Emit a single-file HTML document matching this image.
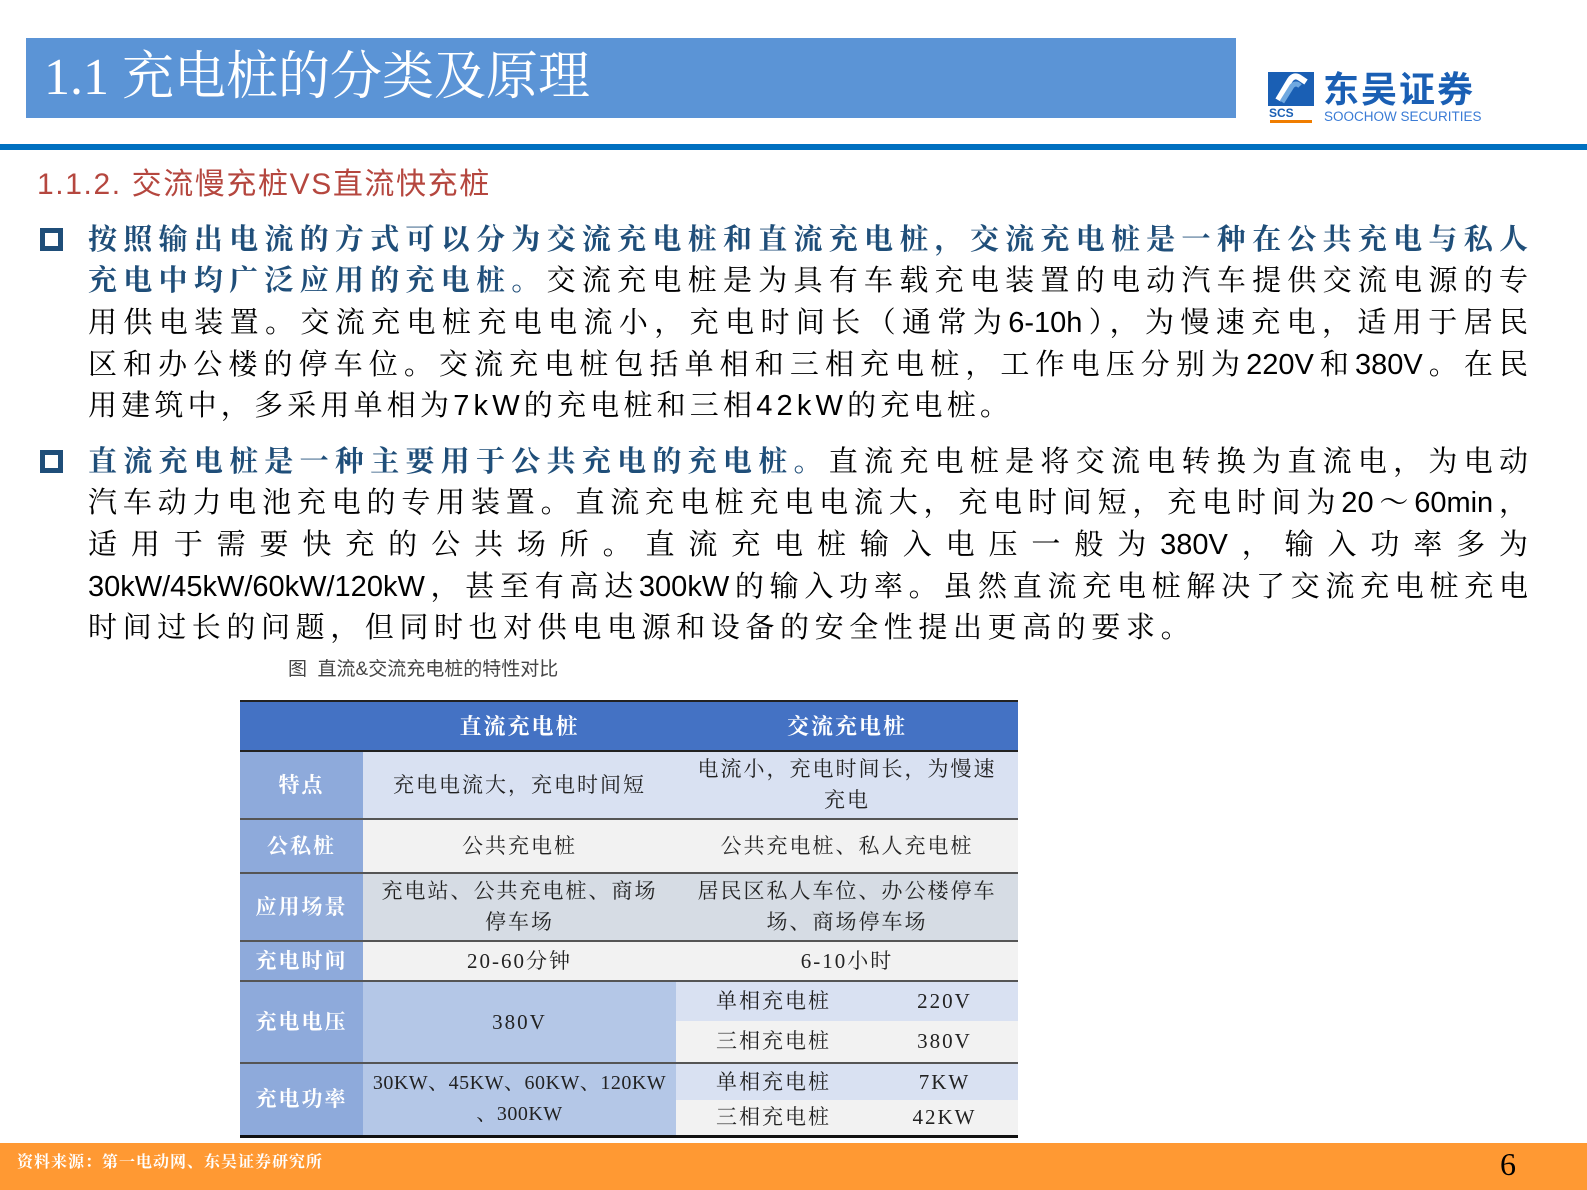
<!DOCTYPE html>
<html><head><meta charset="utf-8">
<style>
*{margin:0;padding:0;box-sizing:border-box}
body{width:1587px;height:1190px;position:relative;background:#fff;overflow:hidden;font-family:"Liberation Serif","Noto Serif CJK SC",serif}
.abs{position:absolute}
.ln{position:absolute;left:88px;width:1440px;height:42px;line-height:42px;font-size:29px;white-space:nowrap;text-align:justify;text-align-last:justify;color:#000;font-family:"Liberation Sans","Noto Serif CJK SC",serif}
.ln.last{text-align:left;text-align-last:left;letter-spacing:4.2px}
.b{color:#1f4e79;font-weight:bold}
.box{position:absolute;left:40px;width:23px;height:23px;border:5px solid #1f4e79}
table{position:absolute;left:240px;top:700px;width:778px;border-collapse:collapse;font-family:"Liberation Serif","Noto Serif CJK SC",serif;font-size:21px;letter-spacing:2px;color:#222}
td{text-align:center;vertical-align:middle;line-height:31px;padding:0;white-space:nowrap}
.h td{background:#4472c4;color:#fff;font-weight:bold;height:50px;border-top:2px solid #222;border-bottom:2px solid #222;font-size:22px}
.c1{background:#8eaadb;color:#fff;font-weight:bold;width:123px}
tr.r td{border-bottom:2px solid #555}
</style></head><body>
<div class="abs" style="left:26px;top:38px;width:1210px;height:80px;background:#5b94d6"></div>
<div class="abs" style="left:44px;top:46px;font-size:52px;color:#fff;line-height:64px;font-family:'Liberation Serif','Noto Serif CJK SC',serif">1.1 充电桩的分类及原理</div>
<svg class="abs" style="left:1268px;top:72px" width="50" height="52" viewBox="0 0 50 52">
<rect x="0" y="0" width="46" height="34" fill="#1a5fb4"/>
<path d="M10 28 L22 8 Q26 2 32 6 L38 10" stroke="#fff" stroke-width="6" fill="none"/>
<path d="M14 30 L24 14 Q28 10 32 14" stroke="#6fa8e0" stroke-width="5" fill="none"/>
<text x="1" y="45" font-size="12" font-weight="bold" fill="#1a5fb4" font-family="Liberation Sans">SCS</text>
<rect x="2" y="48" width="42" height="3" fill="#f07d00"/>
</svg>
<div class="abs" style="left:1323px;top:70px;font-size:36px;font-weight:bold;color:#1a5fb4;letter-spacing:2px;line-height:40px;font-family:'Liberation Sans','Noto Sans CJK SC',sans-serif">东吴证券</div>
<div class="abs" style="left:1324px;top:109px;font-size:13.5px;color:#3a7bd5;line-height:15px;font-family:'Liberation Sans',sans-serif">SOOCHOW SECURITIES</div>
<div class="abs" style="left:0;top:144px;width:1587px;height:6px;background:#0070c0"></div>

<div class="abs" style="left:37px;top:166px;font-size:30px;color:#b5473f;line-height:38px;letter-spacing:1.6px;font-family:'Liberation Sans','Noto Sans CJK SC',sans-serif">1.1.2. 交流慢充桩VS直流快充桩</div>

<div class="box" style="top:228px"></div>
<div class="ln" style="top:219px"><span class="b">按照输出电流的方式可以分为交流充电桩和直流充电桩，交流充电桩是一种在公共充电与私人</span></div>
<div class="ln" style="top:260px"><span class="b">充电中均广泛应用的充电桩。</span>交流充电桩是为具有车载充电装置的电动汽车提供交流电源的专</div>
<div class="ln" style="top:302px">用供电装置。交流充电桩充电电流小，充电时间长（通常为6-10h），为慢速充电，适用于居民</div>
<div class="ln" style="top:344px">区和办公楼的停车位。交流充电桩包括单相和三相充电桩，工作电压分别为220V和380V。在民</div>
<div class="ln last" style="top:385px">用建筑中，多采用单相为7kW的充电桩和三相42kW的充电桩。</div>

<div class="box" style="top:450px"></div>
<div class="ln" style="top:441px"><span class="b">直流充电桩是一种主要用于公共充电的充电桩。</span>直流充电桩是将交流电转换为直流电，为电动</div>
<div class="ln" style="top:482px">汽车动力电池充电的专用装置。直流充电桩充电电流大，充电时间短，充电时间为20～60min，</div>
<div class="ln" style="top:524px">适用于需要快充的公共场所。直流充电桩输入电压一般为380V，输入功率多为</div>
<div class="ln" style="top:566px">30kW/45kW/60kW/120kW，甚至有高达300kW的输入功率。虽然直流充电桩解决了交流充电桩充电</div>
<div class="ln last" style="top:607px;letter-spacing:5.6px">时间过长的问题，但同时也对供电电源和设备的安全性提出更高的要求。</div>

<div class="abs" style="left:288px;top:658px;font-size:19px;color:#444;line-height:24px;font-family:'Liberation Sans','Noto Sans CJK SC',sans-serif">图&nbsp; 直流&amp;交流充电桩的特性对比</div>

<table>
<tr class="h"><td style="width:123px"></td><td style="width:313px">直流充电桩</td><td colspan="2">交流充电桩</td></tr>
<tr class="r" style="height:68px"><td class="c1">特点</td><td style="background:#d9e1f2">充电电流大，充电时间短</td><td colspan="2" style="background:#d9e1f2">电流小，充电时间长，为慢速<br>充电</td></tr>
<tr class="r" style="height:54px"><td class="c1">公私桩</td><td style="background:#f2f2f2">公共充电桩</td><td colspan="2" style="background:#f2f2f2">公共充电桩、私人充电桩</td></tr>
<tr class="r" style="height:68px"><td class="c1">应用场景</td><td style="background:#d6dce4">充电站、公共充电桩、商场<br>停车场</td><td colspan="2" style="background:#d6dce4">居民区私人车位、办公楼停车<br>场、商场停车场</td></tr>
<tr class="r" style="height:40px"><td class="c1">充电时间</td><td style="background:#f2f2f2">20-60分钟</td><td colspan="2" style="background:#f2f2f2">6-10小时</td></tr>
<tr style="height:40px"><td class="c1" rowspan="2" style="border-bottom:2px solid #555">充电电压</td><td rowspan="2" style="background:#b4c7e7;border-bottom:2px solid #555">380V</td><td style="background:#d9e1f2;width:195px">单相充电桩</td><td style="background:#d9e1f2">220V</td></tr>
<tr class="r" style="height:42px"><td style="background:#f2f2f2">三相充电桩</td><td style="background:#f2f2f2">380V</td></tr>
<tr style="height:37px"><td class="c1" rowspan="2" style="border-bottom:3px solid #111">充电功率</td><td rowspan="2" style="background:#b4c7e7;border-bottom:3px solid #111;font-size:20px;letter-spacing:0.5px">30KW、45KW、60KW、120KW<br>、300KW</td><td style="background:#d9e1f2">单相充电桩</td><td style="background:#d9e1f2">7KW</td></tr>
<tr style="height:36px"><td style="background:#f2f2f2;border-bottom:3px solid #111">三相充电桩</td><td style="background:#f2f2f2;border-bottom:3px solid #111">42KW</td></tr>
</table>

<div class="abs" style="left:0;top:1143px;width:1587px;height:47px;background:#ff9933"></div>
<div class="abs" style="left:17px;top:1152px;font-size:16px;font-weight:bold;color:#fff;line-height:22px;letter-spacing:1px;font-family:'Liberation Serif','Noto Serif CJK SC',serif">资料来源：第一电动网、东吴证券研究所</div>
<div class="abs" style="left:1500px;top:1144px;font-size:32px;color:#000;line-height:40px;font-family:'Liberation Serif',serif">6</div>
</body></html>
